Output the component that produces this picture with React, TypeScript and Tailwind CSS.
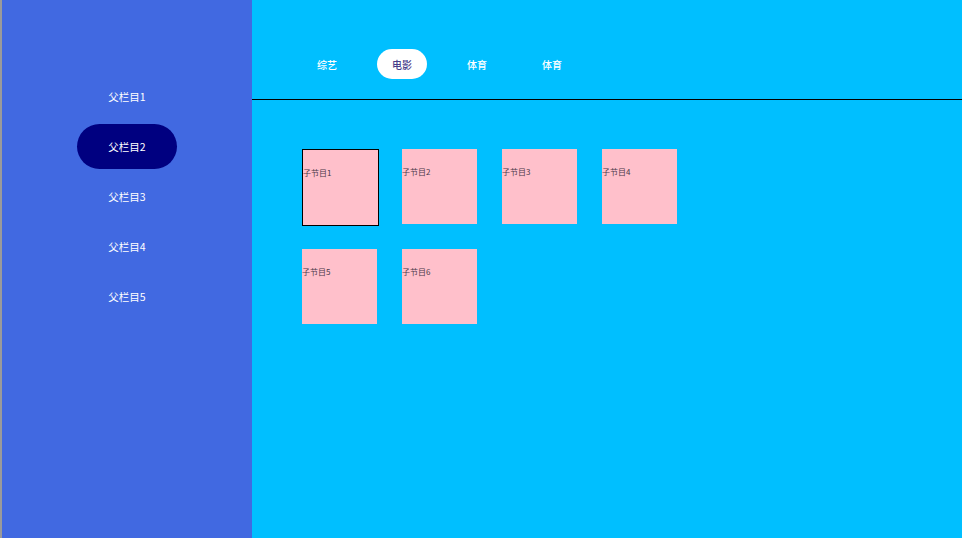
import React, { useState } from "react";

const parents = ["父栏目1", "父栏目2", "父栏目3", "父栏目4", "父栏目5"];
const tabs = ["综艺", "电影", "体育", "体育"];
const children = ["子节目1", "子节目2", "子节目3", "子节目4", "子节目5", "子节目6"];

const App = () => {
  const [parent, setParent] = useState(1);
  const [tab, setTab] = useState(1);
  const [child, setChild] = useState(0);

  return (
    <div
      className="flex h-[538px] w-[962px] overflow-hidden"
      style={{ fontFamily: '"Noto Sans CJK SC", "Noto Sans", sans-serif' }}
    >
      {/* Sidebar */}
      <aside className="flex w-[252px] shrink-0 flex-col items-center gap-[5px] border-l-2 border-[#9a9a9a] bg-[#4169e1] pt-[74px]">
        {parents.map((p, i) => (
          <div
            key={i}
            onClick={() => setParent(i)}
            className={
              "flex h-[45px] w-[100px] cursor-pointer items-center justify-center rounded-full text-[10.5px] text-white " +
              (i === parent ? "bg-[#000080]" : "")
            }
          >
            {p}
          </div>
        ))}
      </aside>

      {/* Main */}
      <main className="flex flex-1 flex-col bg-[#00bfff]">
        {/* Tabs */}
        <div className="flex h-[100px] gap-[25px] border-b border-black pl-[50px] pt-[49px]">
          {tabs.map((t, i) => (
            <div
              key={i}
              onClick={() => setTab(i)}
              className={
                "flex h-[30px] w-[50px] cursor-pointer items-center justify-center rounded-full text-[10px] font-medium " +
                (i === tab ? "bg-white text-[#483d8b]" : "text-white")
              }
            >
              {t}
            </div>
          ))}
        </div>

        {/* Tiles */}
        <div className="grid auto-rows-[75px] grid-cols-[repeat(4,75px)] gap-[25px] pl-[50px] pt-[49px]">
          {children.map((c, i) => (
            <div
              key={i}
              onClick={() => setChild(i)}
              className={
                "box-content h-[75px] w-[75px] cursor-pointer bg-[#ffc0cb] text-[8px] leading-[11px] text-[#4a3a4a] " +
                (i === child ? "border border-black" : "")
              }
            >
              <div className="pt-[17px]">{c}</div>
            </div>
          ))}
        </div>
      </main>
    </div>
  );
};

export default App;
